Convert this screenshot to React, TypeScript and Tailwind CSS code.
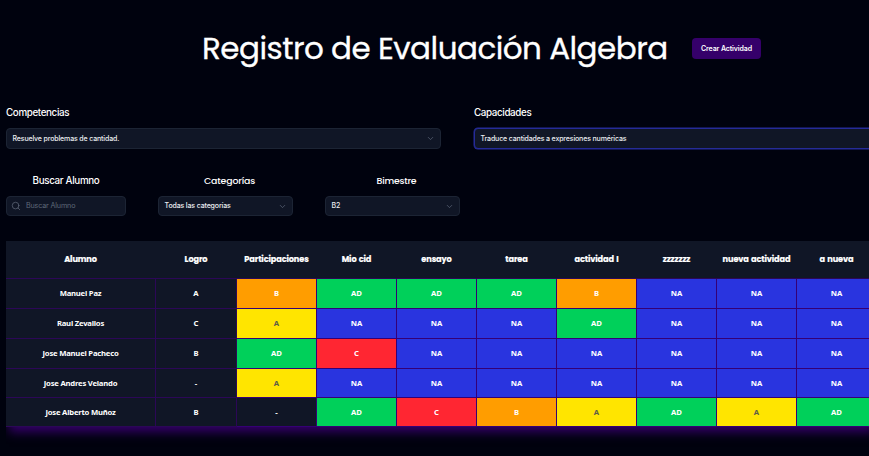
import React from "react";
import { ChevronDown, Search } from "lucide-react";

const headers = [
  "Alumno",
  "Logro",
  "Participaciones",
  "Mio cid",
  "ensayo",
  "tarea",
  "actividad I",
  "zzzzzzz",
  "nueva actividad",
  "a nueva",
];

const rows = [
  ["Manuel Paz", "A", "B", "AD", "AD", "AD", "B", "NA", "NA", "NA"],
  ["Raul Zevallos", "C", "A", "NA", "NA", "NA", "AD", "NA", "NA", "NA"],
  ["Jose Manuel Pacheco", "B", "AD", "C", "NA", "NA", "NA", "NA", "NA", "NA"],
  ["Jose Andres Velando", "-", "A", "NA", "NA", "NA", "NA", "NA", "NA", "NA"],
  ["Jose Alberto Muñoz", "B", "-", "AD", "C", "B", "A", "AD", "A", "AD"],
];

const colors: Record<string, string> = {
  AD: "bg-[#00d05a] text-white",
  A: "bg-[#ffe500] text-[#5c5c48]",
  B: "bg-[#ff9d00] text-white",
  C: "bg-[#ff2632] text-white",
  NA: "bg-[#2934df] text-white",
  "-": "bg-[#101626] text-white",
};

function Select({ text, className }: { text: string; className: string }) {
  return (
    <div className={`flex items-center justify-between rounded-[4px] border bg-[#101626] pr-[5px] pl-[5.5px] font-['Inter',sans-serif] text-[7px] font-medium tracking-[-0.14px] text-[#eceef2] ${className}`}>
      <span className="pt-px whitespace-nowrap">{text}</span>
      <ChevronDown size={9} strokeWidth={2} className="text-[#5a6375]" />
    </div>
  );
}

export default function App() {
  return (
    <div className="h-[456px] w-[869px] overflow-hidden bg-[#00020e] font-['Poppins','Inter',sans-serif] text-white">
      <header className="flex h-[100px] items-start pl-[202px]">
        <h1 className="mt-[24px] w-[490px] text-[31px] leading-[48px] font-normal tracking-[-0.53px] whitespace-nowrap [-webkit-text-stroke:0.3px_white]">
          Registro de Evaluación Algebra
        </h1>
        <button className="mt-[38px] h-[21px] w-[69px] rounded-[4px] bg-[#35006a] pt-px font-['Inter',sans-serif] text-[7px] font-semibold tracking-[-0.12px] whitespace-nowrap">
          Crear Actividad
        </button>
      </header>

      <section className="flex h-[72px] w-[903px] gap-[33px] pl-[6px]">
        <div className="w-[435px] shrink-0">
          <div className="mt-[5px] h-[16px] font-['Inter',sans-serif] text-[9.8px] leading-[16px] font-medium tracking-[-0.36px]">Competencias</div>
          <Select text="Resuelve problemas de cantidad." className="mt-[7px] h-[21px] border-[#1c2434]" />
        </div>
        <div className="w-[435px] shrink-0">
          <div className="mt-[5px] h-[16px] font-['Inter',sans-serif] text-[9.8px] leading-[16px] font-medium tracking-[-0.36px]">Capacidades</div>
          <Select text="Traduce cantidades a expresiones numéricas" className="mt-[7px] h-[21px] border-[#252b98] ring-[0.5px] ring-[#252b98]" />
        </div>
      </section>

      <section className="flex h-[69px] gap-[32px] pl-[6px] text-center">
        <div className="w-[120px]">
          <div className="h-[18px] font-['Inter',sans-serif] text-[9.8px] leading-[18px] font-medium tracking-[-0.33px]">Buscar Alumno</div>
          <div className="mt-[6px] flex h-[20px] items-center gap-[5px] rounded-[4px] border border-[#1c2434] bg-[#101626] pl-[4px] font-['Inter',sans-serif] text-[7.2px] tracking-[-0.17px] text-[#5f6879]">
            <Search size={10} strokeWidth={1.8} />
            <span className="pt-px">Buscar Alumno</span>
          </div>
        </div>
        <div className="w-[135px]">
          <div className="h-[18px] pl-[8px] text-[9.4px] leading-[18px] font-medium tracking-[-0.15px]">Categorías</div>
          <Select text="Todas las categorías" className="mt-[6px] h-[20px] border-[#1c2434]" />
        </div>
        <div className="w-[135px]">
          <div className="h-[18px] pl-[8px] text-[9.4px] leading-[18px] font-medium tracking-[-0.25px]">Bimestre</div>
          <Select text="B2" className="mt-[6px] h-[20px] border-[#1c2434]" />
        </div>
      </section>

      <div className="ml-[6px] h-[215px] w-[863px] overflow-hidden">
        <div className="w-[871px] bg-[#101626] shadow-[0_8px_10px_-3px_#35006a]">
          <div className="grid h-[38px] grid-cols-[150px_81px_repeat(8,80px)] border-b border-[#2b0757]">
            {headers.map((name) => (
              <div key={name} className="flex items-center justify-center pr-px text-[8.2px] font-bold tracking-[-0.12px] whitespace-nowrap [word-spacing:0.6px] [-webkit-text-stroke:0.2px_white]">
                {name}
              </div>
            ))}
          </div>
          {rows.map((row, r) => (
            <div key={row[0]} className={`grid grid-cols-[150px_81px_repeat(8,80px)] ${r < 3 ? "h-[30px]" : "h-[29px]"}`}>
              {row.map((value, c) => (
                <div
                  key={c}
                  className={`flex items-center justify-center border-r border-b pt-[1.5px] font-['Noto_Sans',sans-serif] text-[7.7px] font-bold whitespace-nowrap ${
                    c === 0 ? "tracking-[-0.22px]" : ""
                  } ${c < 2 ? "border-[#2b0757] bg-[#101626]" : `border-[#350075] ${colors[value]}`}`}
                >
                  {value}
                </div>
              ))}
            </div>
          ))}
        </div>
      </div>
    </div>
  );
}
